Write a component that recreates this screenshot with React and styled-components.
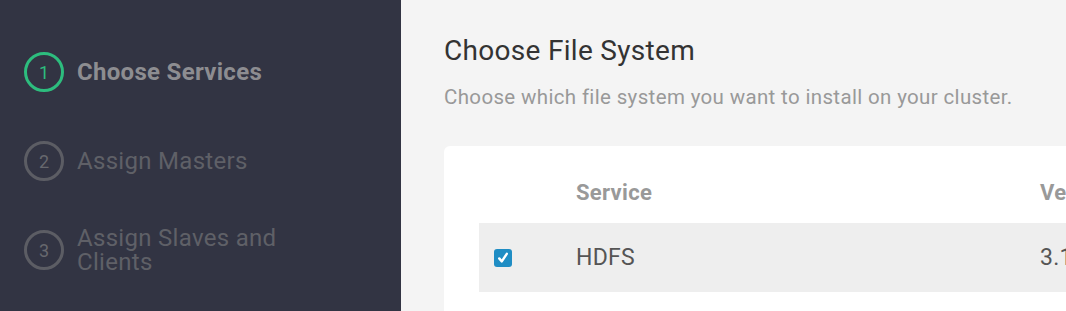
import styled, { createGlobalStyle } from 'styled-components'

const GlobalStyle = createGlobalStyle`
  html, body {
    margin: 0;
    padding: 0;
    height: 100%;
  }
  body {
    font-family: Roboto, 'Liberation Sans', sans-serif;
    background: #f4f4f4;
    overflow: hidden;
    letter-spacing: 0.3px;
  }
`

const Layout = styled.div`
  display: flex;
  width: 1066px;
  height: 311px;
  overflow: hidden;
`

const Sidebar = styled.nav`
  width: 401px;
  flex-shrink: 0;
  background: #323443;
  padding: 52px 0 0 24px;
  box-sizing: border-box;
  display: flex;
  flex-direction: column;
  gap: 49px;
`

const Step = styled.div`
  display: flex;
  align-items: center;
  gap: 13px;
  height: 40px;
`

const StepNumber = styled.span`
  width: 40px;
  height: 40px;
  box-sizing: border-box;
  border-radius: 50%;
  border: 3px solid ${({ $active }) => ($active ? '#2dbd7e' : '#5c5d64')};
  color: ${({ $active }) => ($active ? '#2dbd7e' : '#67686e')};
  display: flex;
  align-items: center;
  justify-content: center;
  font-size: 18px;
  font-weight: 400;
  letter-spacing: 0;
  flex-shrink: 0;
`

const StepLabel = styled.span`
  font-size: 24px;
  line-height: 24px;
  max-width: 220px;
  margin-top: -1px;
  font-weight: ${({ $active }) => ($active ? 700 : 400)};
  color: ${({ $active }) => ($active ? '#8d8d91' : '#5f6067')};
`

const Main = styled.main`
  flex: 1;
  padding: 33px 0 0 43px;
  min-width: 0;
`

const Title = styled.h1`
  margin: 0;
  font-size: 28px;
  font-weight: 400;
  color: #333;
  line-height: 36px;
`

const Subtitle = styled.p`
  margin: 16px 0 0;
  font-size: 20.5px;
  letter-spacing: 0.35px;
  color: #999;
  line-height: 24px;
  white-space: nowrap;
`

const Card = styled.section`
  margin-top: 37px;
  background: #fff;
  border-radius: 6px;
  padding: 15px 0 60px 35px;
  width: 800px;
`

const Row = styled.div`
  display: grid;
  grid-template-columns: 97px 464px 1fr;
  align-items: center;
  height: ${({ $head }) => ($head ? '62px' : '69px')};
  background: ${({ $head }) => ($head ? 'transparent' : '#eeeeee')};
  font-size: ${({ $head }) => ($head ? '22px' : '23px')};
  font-weight: ${({ $head }) => ($head ? 700 : 400)};
  color: ${({ $head }) => ($head ? '#999' : '#555')};
  white-space: nowrap;
`

const CheckCell = styled.span`
  display: flex;
  padding-left: 15px;
`

const Checkbox = styled.span`
  width: 18px;
  height: 18px;
  border-radius: 3px;
  background: #1f8dc4;
  display: flex;
  align-items: center;
  justify-content: center;
`

const steps = [
  { n: 1, label: 'Choose Services', active: true },
  { n: 2, label: 'Assign Masters' },
  { n: 3, label: 'Assign Slaves and Clients' },
]

export default function App() {
  return (
    <>
      <GlobalStyle />
      <Layout>
        <Sidebar>
          {steps.map(step => (
            <Step key={step.n}>
              <StepNumber $active={step.active}>{step.n}</StepNumber>
              <StepLabel $active={step.active}>{step.label}</StepLabel>
            </Step>
          ))}
        </Sidebar>
        <Main>
          <Title>Choose File System</Title>
          <Subtitle>Choose which file system you want to install on your cluster.</Subtitle>
          <Card>
            <Row $head>
              <span />
              <span>Service</span>
              <span>Version</span>
            </Row>
            <Row>
              <CheckCell>
                <Checkbox>
                  <svg width="12" height="12" viewBox="0 0 12 12">
                    <path d="M2.2 6.4 L4.8 9.4 L9.8 1.8" fill="none" stroke="#fff" strokeWidth="2.4" strokeLinecap="round" strokeLinejoin="round" />
                  </svg>
                </Checkbox>
              </CheckCell>
              <span>HDFS</span>
              <span>3.1.1.3.1</span>
            </Row>
          </Card>
        </Main>
      </Layout>
    </>
  )
}
